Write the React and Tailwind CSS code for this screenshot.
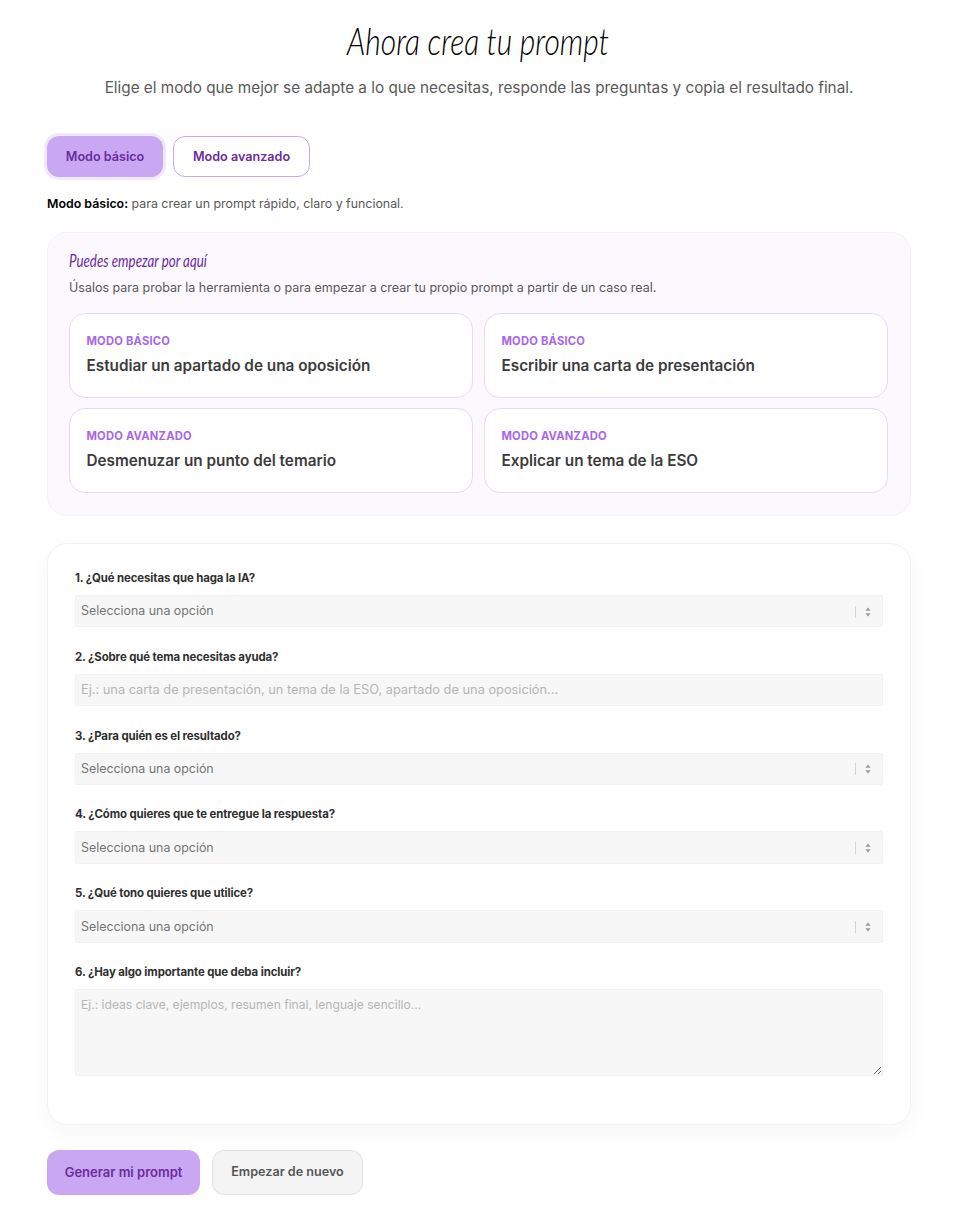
import React from 'react';

const bodyFont = "font-['Inter','Noto_Sans',sans-serif]";

const starters = [
  { mode: 'MODO BÁSICO', title: 'Estudiar un apartado de una oposición' },
  { mode: 'MODO BÁSICO', title: 'Escribir una carta de presentación' },
  { mode: 'MODO AVANZADO', title: 'Desmenuzar un punto del temario' },
  { mode: 'MODO AVANZADO', title: 'Explicar un tema de la ESO' },
];

const SelectField = () => (
  <div className="flex h-[32.4px] items-center rounded-[2px] border border-[#f2f2f2] bg-[#f7f7f7] pt-px pl-[5px] pr-[11px] text-[12.4px] text-[#757575]">
    <span className="flex-1">Selecciona una opción</span>
    <span className="mr-[9px] h-[12px] w-px bg-[#d4d4d4]" />
    <svg width="6" height="10" viewBox="0 0 6 10" fill="#9a9a9a">
      <path d="M3 0.5 L5.6 3.8 H0.4 Z" />
      <path d="M3 9.5 L5.6 6.2 H0.4 Z" />
    </svg>
  </div>
);

const Label = ({ children }) => (
  <label className="mb-[9px] block text-[11.4px] leading-[16px] font-bold tracking-[-0.1px] text-[#2f2f2f]">{children}</label>
);

export default function App() {
  return (
    <div className={`${bodyFont} min-h-[1212px] bg-white`}>
      <div className="ml-[47px] w-[864px] pt-[12px]">
        <h1 className="origin-center -translate-x-px scale-x-[0.79] text-center font-['Lato',sans-serif] text-[38px] leading-[56px] font-light text-black italic">
          Ahora crea tu prompt
        </h1>
        <p className="mt-[6px] text-center text-[15.3px] leading-[28px] text-[#595959]">
          Elige el modo que mejor se adapte a lo que necesitas, responde las preguntas y copia el resultado final.
        </p>

        <div className="mt-[34px] flex gap-[10px]">
          <button className="h-[41px] w-[116px] rounded-[12px] bg-[#c9a7f2] pt-[2px] text-[12.6px] font-semibold text-[#6a2c9e] shadow-[0_0_0_3px_#f1e8fc]">
            Modo básico
          </button>
          <button className="h-[41px] w-[137px] rounded-[12px] border border-[#c9a7f2] bg-white pt-[2px] text-[12.6px] font-semibold text-[#6a2c9e]">
            Modo avanzado
          </button>
        </div>

        <p className="mt-[18px] text-[12.4px] leading-[17px] text-[#595959]">
          <strong className="font-semibold text-black">Modo básico:</strong> para crear un prompt rápido, claro y funcional.
        </p>

        <section className="mt-[20px] rounded-[20px] border border-[#f3f0f7] bg-[#fbf8fe] pt-[15px] pr-[22px] pb-[22px] pl-[21px]">
          <h2 className="origin-left scale-x-[0.74] font-['Lato',sans-serif] text-[18px] leading-[24px] font-normal text-[#6a2c9e] italic">
            Puedes empezar por aquí
          </h2>
          <p className="mt-[7px] text-[12.5px] leading-[17px] text-[#595959]">
            Úsalos para probar la herramienta o para empezar a crear tu propio prompt a partir de un caso real.
          </p>
          <div className="mt-[17px] grid grid-cols-2 gap-x-[11px] gap-y-[10px]">
            {starters.map((item) => (
              <div key={item.title} className="h-[85px] rounded-[16px] border border-[#e8d9f5] bg-white px-[16.5px] pt-[20px]">
                <div className="text-[11.2px] leading-[15px] font-bold tracking-[0.2px] text-[#a866e8]">{item.mode}</div>
                <div className="mt-[5px] text-[15.3px] leading-[24px] font-semibold text-[#3c3c3c]">{item.title}</div>
              </div>
            ))}
          </div>
        </section>

        <section className="mt-[27px] h-[582px] rounded-[20px] border border-[#f2f2f2] bg-white px-[27px] pt-[26px] shadow-[0_8px_24px_rgba(0,0,0,0.04)]">
          <Label>1. ¿Qué necesitas que haga la IA?</Label>
          <SelectField />
          <div className="mt-[21.4px]">
            <Label>2. ¿Sobre qué tema necesitas ayuda?</Label>
            <input
              className="h-[32.4px] w-full rounded-[2px] border border-[#f2f2f2] bg-[#f7f7f7] px-[5px] text-[12.8px] outline-none placeholder:text-[#b5b5b5]"
              placeholder="Ej.: una carta de presentación, un tema de la ESO, apartado de una oposición..."
            />
          </div>
          <div className="mt-[21.4px]">
            <Label>3. ¿Para quién es el resultado?</Label>
            <SelectField />
          </div>
          <div className="mt-[21.4px]">
            <Label>4. ¿Cómo quieres que te entregue la respuesta?</Label>
            <SelectField />
          </div>
          <div className="mt-[21.4px]">
            <Label>5. ¿Qué tono quieres que utilice?</Label>
            <SelectField />
          </div>
          <div className="mt-[21.4px]">
            <Label>6. ¿Hay algo importante que deba incluir?</Label>
            <textarea
              className="block h-[87px] w-full rounded-[2px] border border-[#f2f2f2] bg-[#f7f7f7] px-[5px] py-[6px] text-[12.1px] outline-none placeholder:text-[#b5b5b5]"
              placeholder="Ej.: ideas clave, ejemplos, resumen final, lenguaje sencillo..."
            />
          </div>
        </section>

        <div className="mt-[25px] flex gap-[12px]">
          <button className="h-[45px] w-[153px] rounded-[12px] bg-[#c9a7f2] text-[13px] font-semibold text-[#6a2c9e]">
            Generar mi prompt
          </button>
          <button className="h-[45px] w-[151px] rounded-[12px] border border-[#e2e2e2] bg-[#f4f4f4] text-[12.6px] font-semibold text-[#555555]">
            Empezar de nuevo
          </button>
        </div>
      </div>
    </div>
  );
}
